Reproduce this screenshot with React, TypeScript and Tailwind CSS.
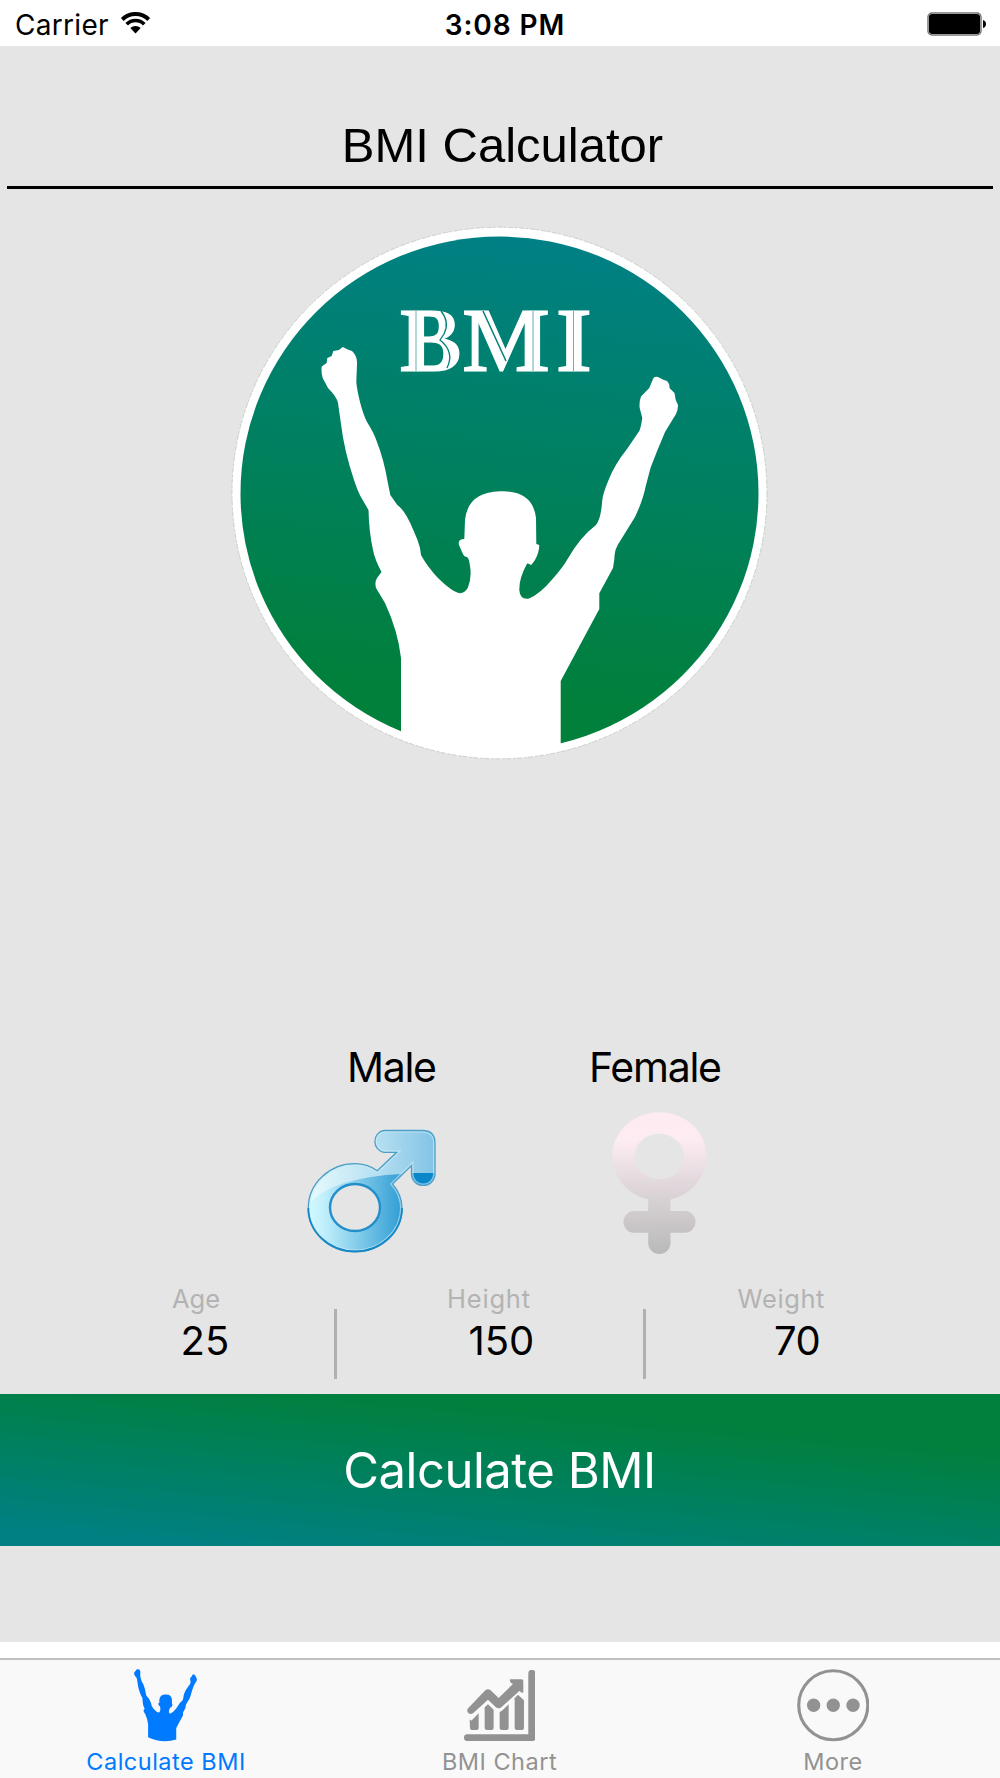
const FIGURE =
  "M401 730 L401 658 Q398 631 385 603 L376 588 Q374.500 582 377 578 L381.500 572 Q375 560 373 550 Q369 532 368.500 510 L361.500 498 Q358 492 354 480 Q344 450 341 424 L338 403 Q337 397 328 388 L322.700 378 Q321 372 321.700 366.500 L326.700 363 L327.300 358 L331.700 356 L333.300 351 L339 350 L342.700 347 L348.300 349.700 L352 351 Q357.500 356 357 364 L356.300 382 Q357 390 360 402 Q363 414 367 422 Q374 433 377 442 Q384 460 387.700 482 L390.300 495 L397.300 505 Q405 510 413.300 530 Q418 540 420 548 L421 555 Q427 566 437 577 Q452 592 460 593.300 Q465 593 467.700 588 Q472 578 470 566 Q469 558 467 557 Q464 557 462.500 553 L459 545 Q457.500 539 464.300 539 L465 520 Q468 492 500 491.300 L504 491.300 Q533 492 536 518 L536.300 544 L539.300 545 Q539 553 535 560 L531.300 565 L527.300 563.300 Q519 578 519.300 590 Q520 600 529 598.500 Q540 594 553 578.500 Q563 567 567 560 Q580 537 596 525 Q601 519 602.300 500 Q603 493 609 479 Q615 464 627 449 L639.300 431 Q641 427 642.300 418 L639.700 408 Q639 402 641 396.500 L649.300 388 L653 379 Q654 376 658 377 L663.300 379.700 L667 381 Q670 384 669.500 388 L674.500 393 L675.700 400 L678 405 Q678 410 676 414 L665 432 L656.700 452 L650.500 468 L645.500 487 Q643 500 635 517 L617.700 545 Q614 551 614.500 558 L613 568 L599.300 593.300 L599.300 609 L560.700 681 L560.700 747 Q480 771 401 734 Z";

const INTER = "font-['Inter','Liberation_Sans',sans-serif]";

function Wifi() {
  return (
    <svg width="31" height="22" viewBox="120 13 31 22" aria-hidden="true">
      <path d="M122.300 20.500 A18.500 18.500 0 0 1 148.700 20.500" fill="none" stroke="#000" strokeWidth="4" />
      <path d="M126.700 25.300 A12 12 0 0 1 144.300 25.300" fill="none" stroke="#000" strokeWidth="3.600" />
      <path d="M130.300 29 A7.500 7.500 0 0 1 140.700 29 L135.500 34.500 Z" />
    </svg>
  );
}

function Battery() {
  return (
    <svg width="60" height="24" viewBox="0 0 60 24" aria-hidden="true">
      <rect x="1" y="1" width="53" height="22" rx="4" fill="#fff" stroke="#777" strokeWidth="1.500" />
      <rect x="2" y="2" width="51" height="20" rx="3" />
      <path d="M56 8 Q59 9 59 12 Q59 15 56 16 Z" />
    </svg>
  );
}

function Logo() {
  return (
    <svg className="mx-auto block" width="540" height="536" viewBox="230 225 540 536" aria-hidden="true">
      <defs>
        <linearGradient id="disc" gradientUnits="userSpaceOnUse" x1="528" y1="240" x2="480" y2="690">
          <stop offset="0" stopColor="#008084" />
          <stop offset="1" stopColor="#00803b" />
        </linearGradient>
      </defs>
      <ellipse cx="499.500" cy="493" rx="267.500" ry="265.800" fill="#fff" />
      <ellipse cx="499.500" cy="493" rx="267.500" ry="265.800" fill="none" stroke="#bccabf" strokeWidth=".8" strokeDasharray="5 1 3 2" />
      <ellipse cx="499.500" cy="493.500" rx="259" ry="257" fill="url(#disc)" />
      <path d={FIGURE} fill="#fff" />
      <text x="400 463 556" y="370.500" fill="#fff" stroke="#fff" strokeWidth="1.200" fontFamily="Liberation Serif, serif" fontWeight="700" fontSize="92">
        BMI
      </text>
      <g fill="none" stroke="#008077" strokeWidth="1">
        <path d="M416 311V371M573.500 311V371M533 311V371" strokeOpacity=".6" />
        <path d="M483 311 L506 361" strokeWidth="1.500" />
        <path d="M441 311 Q450 322 444 334 L440 340 Q455 352 447 368" strokeWidth="1.300" />
      </g>
    </svg>
  );
}

const MALE =
  "M377.300 1170.700 L396.700 1152.300 H384 A10.500 11 0 0 1 384 1130.500 H422 Q435 1130.500 435 1143 V1175 A11.800 11.500 0 0 1 411.500 1175 V1165.500 L392.500 1184 Q402 1195 402 1208 A47 43.500 0 0 1 355 1251.500 A46.700 43.500 0 0 1 308.300 1208 A46.700 44.300 0 0 1 355 1163.700 Q367 1163.700 377.300 1170.700 Z";
const MALE_HOLE = "M380 1207.500 A25 23.500 0 1 0 330 1207.500 A25 23.500 0 1 0 380 1207.500 Z";

function MaleIcon() {
  return (
    <svg className="block overflow-visible" width="132" height="126" viewBox="306 1128 132 126" aria-hidden="true">
      <defs>
        <linearGradient id="male-body" gradientUnits="userSpaceOnUse" x1="310" y1="0" x2="404" y2="0">
          <stop offset="0" stopColor="#d2f9ff" />
          <stop offset=".15" stopColor="#c0effb" />
          <stop offset=".9" stopColor="#3fa5d8" />
          <stop offset="1" stopColor="#2d9bd3" />
        </linearGradient>
        <linearGradient id="male-gloss" gradientUnits="userSpaceOnUse" x1="310" y1="0" x2="436" y2="0">
          <stop offset="0" stopColor="#e6fafd" />
          <stop offset=".5" stopColor="#b9e1f2" />
          <stop offset="1" stopColor="#82c3e5" />
        </linearGradient>
        <clipPath id="male-clip">
          <path d={MALE + MALE_HOLE} clipRule="evenodd" />
        </clipPath>
      </defs>
      <g clipPath="url(#male-clip)">
        <path d="M300 1120H404V1260H300Z" fill="url(#male-body)" />
        <path d="M300 1120H440V1174H402Q335 1177 309 1203H300Z" fill="url(#male-gloss)" />
        <path d="M409 1173H437V1190H409Z" fill="#0a86cb" />
        <path d={MALE} fill="none" stroke="#c9ecf8" strokeWidth="4" strokeOpacity=".6" />
      </g>
      <path d={MALE} fill="none" stroke="#4d9fc8" strokeWidth="1.300" />
      <path d="M308.300 1208 A46.700 43.500 0 0 0 355 1251.500 A47 43.500 0 0 0 402 1208" fill="none" stroke="#1688c6" strokeWidth="1.800" />
      <path d={MALE_HOLE} fill="none" stroke="#238fca" strokeWidth="2.400" />
    </svg>
  );
}

function FemaleIcon() {
  return (
    <svg className="block overflow-visible" width="95" height="142" viewBox="612.500 1112 95 142" aria-hidden="true">
      <defs>
        <linearGradient id="female" gradientUnits="userSpaceOnUse" x1="657" y1="1112" x2="660" y2="1254">
          <stop offset="0" stopColor="#fdebf1" />
          <stop offset=".2" stopColor="#fdecf2" />
          <stop offset=".5" stopColor="#e1d8dc" />
          <stop offset="1" stopColor="#b9b9b9" />
        </linearGradient>
      </defs>
      <path
        fill="url(#female)"
        fillRule="evenodd"
        d="M648.700 1199.500 A47.100 44.300 0 1 1 671 1199.500 V1211 H685.500 A10.500 10.800 0 0 1 685.500 1232.700 H671 V1243 A11 10.800 0 0 1 648.700 1243 V1232.700 H634.500 A10.500 10.800 0 0 1 634.500 1211 H648.700 Z M684.300 1156.500 A24.600 22.800 0 1 0 635 1156.500 A24.600 22.800 0 1 0 684.300 1156.500 Z"
      />
    </svg>
  );
}

function FigureIcon() {
  return (
    <svg width="63" height="73" viewBox="321 346.500 357.500 414" preserveAspectRatio="none" aria-hidden="true">
      <path d={FIGURE} fill="#007aff" />
    </svg>
  );
}

function ChartIcon() {
  return (
    <svg width="71.300" height="71" viewBox="132 60 214 213" aria-hidden="true">
      <g fill="#929292">
        <path d="M325 70 A10.500 10.500 0 0 1 346 70 V265 Q346 273 338 273 H142 A10 10 0 0 1 142 253 H325 Z" />
        <path d="M149 208 L154 212 L176 190 V234 Q176 240 170 240 H156 Q150 240 150 234 Z" />
        <path d="M194 172 L204 163 L221 179 V234 Q221 240 215 240 H201 Q194 240 194 234 Z" />
        <path d="M239 186 L246 182 L266 163 V234 Q266 240 260 240 H246 Q239 240 239 234 Z" />
        <path d="M284 145 L294 134 L312 151 V234 Q312 240 306 240 H291 Q284 240 284 234 Z" />
        <path d="M270 88 H305 Q310 88 310 93 V128 Q303 130 299 122 L245 171 Q236 179 227 171 L204 149 L160 189 Q152 195 145 189 Q138 181 145 174 L196 121 Q204 114 212 121 L236 144 L279 102 Q268 98 270 88 Z" />
      </g>
    </svg>
  );
}

function MoreIcon() {
  return (
    <svg width="72.500" height="72.500" viewBox="81 57 217 218" aria-hidden="true">
      <circle cx="189.500" cy="166" r="103.800" fill="none" stroke="#929292" strokeWidth="9.400" />
      <g fill="#929292">
        <circle cx="130.500" cy="166" r="20" />
        <circle cx="189.500" cy="166" r="20" />
        <circle cx="249" cy="166" r="20" />
      </g>
    </svg>
  );
}

export default function App() {
  return (
    <div className={`flex h-[1778px] w-[1000px] flex-col overflow-hidden bg-white text-black ${INTER}`}>
      <header className="grid h-[46px] shrink-0 grid-cols-3 items-center pt-0.5 pr-[13px] pl-[15px] text-[28px] leading-[42px]">
        <div className="flex items-center gap-[11px]">
          <span className="pt-px tracking-[0.3px]">Carrier</span>
          <span className="-mt-0.5 flex"><Wifi /></span>
        </div>
        <time className="pt-px pl-[8px] text-center font-semibold tracking-[0.900px]">3:08 PM</time>
        <span className="flex justify-end"><Battery /></span>
      </header>

      <main className="flex h-[1596px] shrink-0 flex-col bg-[#e5e5e5]">
        <div className="mx-[7px] h-[143px] border-b-[3px] border-black pt-[74px]">
          <h1 className="pl-[5px] text-center font-['Liberation_Sans',sans-serif] text-[49px] leading-[50px]">BMI Calculator</h1>
        </div>
        <div className="pt-9">
          <Logo />
        </div>

        <div className="mt-[281px] flex h-[238.500px] pl-[306px] text-[41px] leading-[50px]">
          <button className="flex w-[283px] flex-col items-start">
            <span className="ml-[41px] tracking-[-1.300px]">Male</span>
            <span className="mt-[36px]"><MaleIcon /></span>
          </button>
          <button className="flex flex-col items-start">
            <span className="tracking-[-1.250px]">Female</span>
            <span className="mt-5 ml-[23px]"><FemaleIcon /></span>
          </button>
        </div>

        <div className="flex h-[113.500px] text-[40px] leading-[46px]">
          <div className="w-[334px]">
            <div className="pl-[172px] text-[25.500px] leading-9 text-[#b3b3b3]">Age</div>
            <div className="pt-px pl-[180.500px]">25</div>
          </div>
          <div className="mt-[28.500px] h-[70px] w-[3px] bg-[#b0b0b0]" />
          <div className="w-[306px]">
            <div className="pl-[110px] text-[25.500px] leading-9 tracking-[0.800px] text-[#b3b3b3]">Height</div>
            <div className="pt-px pl-[131.500px]">150</div>
          </div>
          <div className="mt-[28.500px] h-[70px] w-[3px] bg-[#b0b0b0]" />
          <div>
            <div className="pl-[91.500px] text-[25.500px] leading-9 tracking-[0.600px] text-[#b3b3b3]">Weight</div>
            <div className="pt-px pl-[128px] tracking-[-0.500px]">70</div>
          </div>
        </div>

        <button className="h-[152px] w-full bg-[linear-gradient(5deg,#008082_8%,#00803d_76%)] pt-0.5 pr-px text-center text-[49px] leading-[150px] tracking-[-0.500px] text-white">
          Calculate BMI
        </button>
      </main>

      <nav className="mt-4 grid h-[120px] shrink-0 grid-cols-[332px_336px_332px] border-t-2 border-[#c0c0c0] bg-[#f9f9f9] text-[23.500px] leading-[30px] tracking-[0.500px] text-[#929292]">
        <button className="flex flex-col items-center pt-[9px] text-[#007aff]">
          <span className="flex h-[78px] items-start pr-px"><FigureIcon /></span>
          <span>Calculate BMI</span>
        </button>
        <button className="flex flex-col items-center pt-[9px] pr-px">
          <span className="flex h-[78px] items-start pt-px"><ChartIcon /></span>
          <span>BMI Chart</span>
        </button>
        <button className="flex flex-col items-center pt-[9px] pr-0.5">
          <span className="flex h-[78px] items-start"><MoreIcon /></span>
          <span>More</span>
        </button>
      </nav>
    </div>
  );
}
